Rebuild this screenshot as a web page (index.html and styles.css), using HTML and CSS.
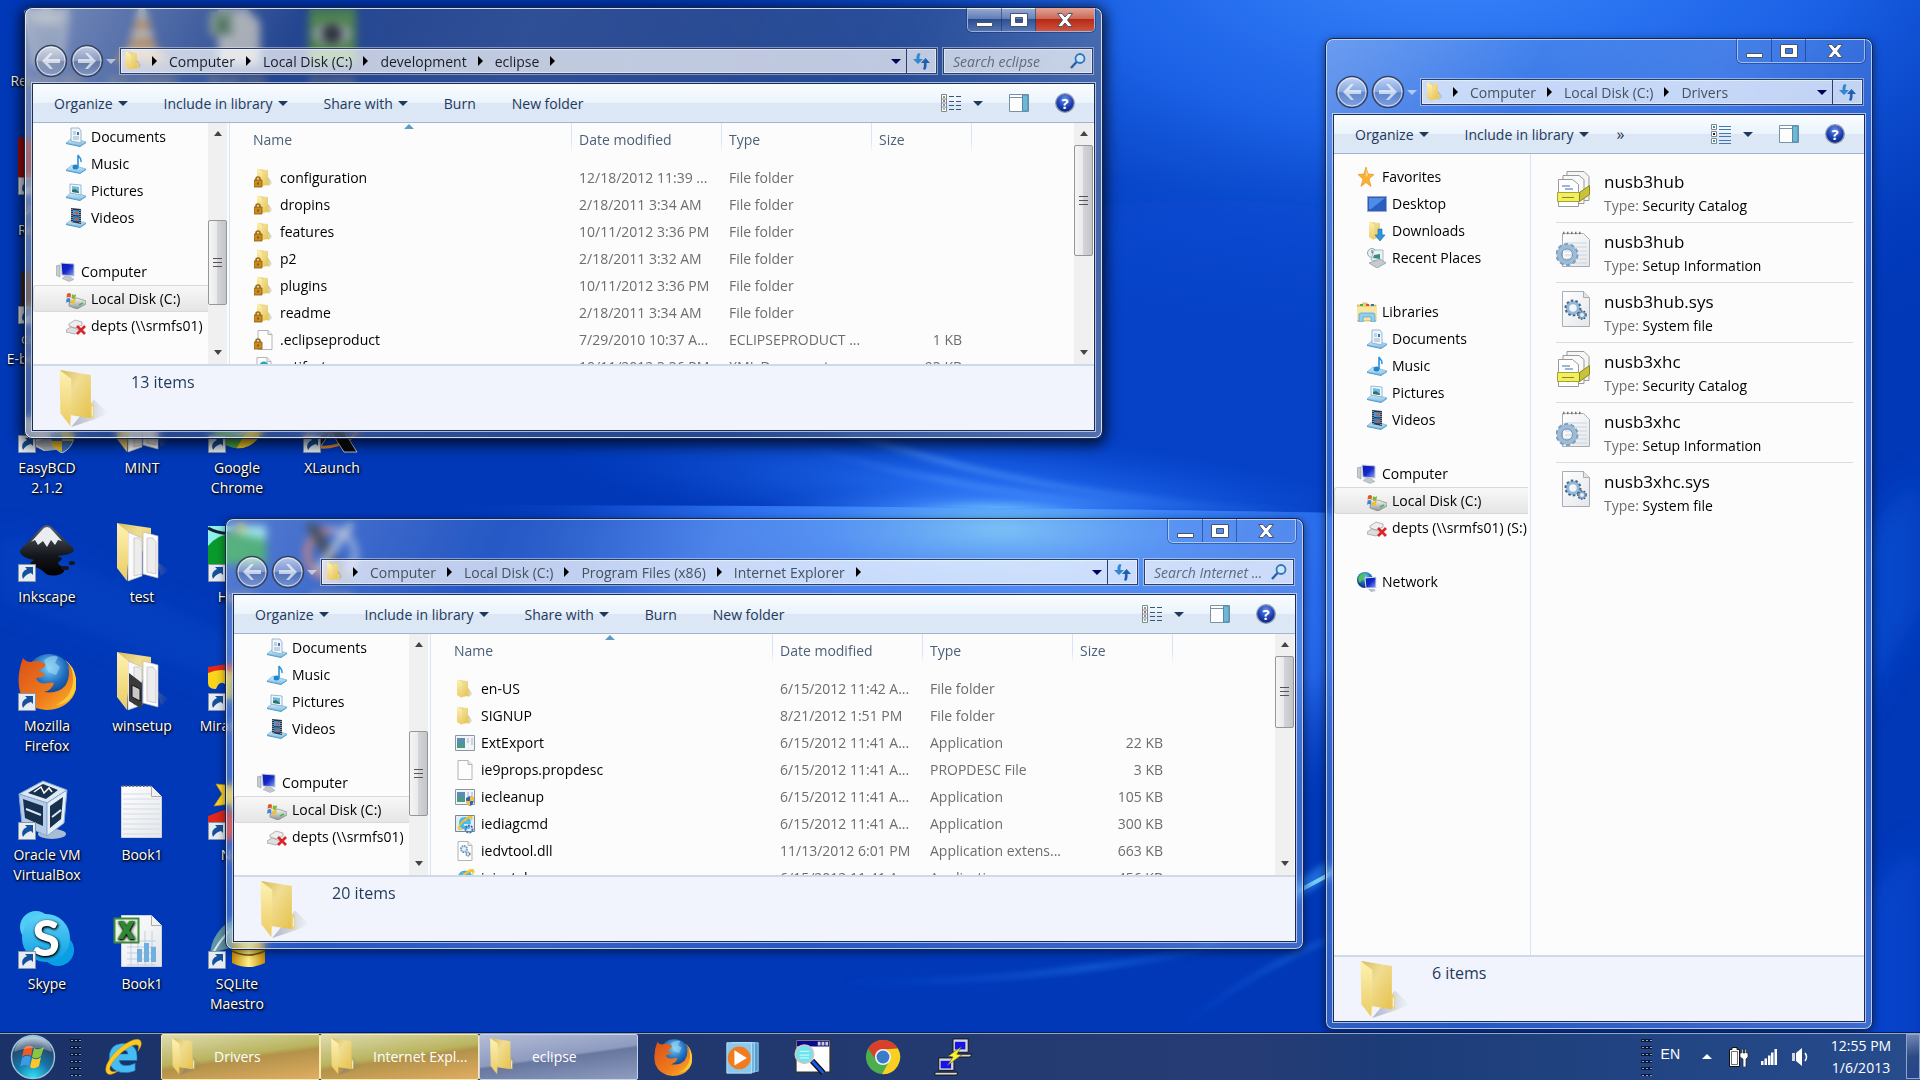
FILE: index.html
```html
<!DOCTYPE html>
<html lang="en">

<head>
    <meta charset="UTF-8">
    <meta name="viewport" content="width=device-width, initial-scale=1.0">
    <title>Desktop</title>
    <link rel="stylesheet" href="styles.css">
</head>

<body>
    <!-- Icon library -->
    <svg class="sprite" width="0" height="0" aria-hidden="true">
        <defs>
            <linearGradient id="gFlap" x1="0" y1="0" x2="0" y2="1"><stop offset="0" stop-color="#fdf2b4"/><stop offset="1" stop-color="#eccb62"/></linearGradient>
            <linearGradient id="gBack" x1="0" y1="0" x2="1" y2="1"><stop offset="0" stop-color="#d9bb62"/><stop offset=".4" stop-color="#f0dd92"/><stop offset="1" stop-color="#e6c24c"/></linearGradient>
            <linearGradient id="gShade" x1="0" y1="0" x2="1" y2="0"><stop offset="0" stop-color="#70788a" stop-opacity=".5"/><stop offset="1" stop-color="#70788a" stop-opacity="0"/></linearGradient>
            <linearGradient id="gPage" x1="0" y1="0" x2="1" y2="1"><stop offset="0" stop-color="#ffffff"/><stop offset="1" stop-color="#e4e6ea"/></linearGradient>
            <linearGradient id="gStand" x1="0" y1="0" x2="0" y2="1"><stop offset="0" stop-color="#d8effb"/><stop offset="1" stop-color="#7fbfe4"/></linearGradient>
            <linearGradient id="gScreen" x1="0" y1="0" x2="1" y2="1"><stop offset="0" stop-color="#0a1cb4"/><stop offset=".5" stop-color="#1427c8"/><stop offset="1" stop-color="#8fa8f4"/></linearGradient>
            <linearGradient id="gMetal" x1="0" y1="0" x2="0" y2="1"><stop offset="0" stop-color="#f6f6f6"/><stop offset="1" stop-color="#8e9396"/></linearGradient>
            <radialGradient id="gHelp" cx=".5" cy=".3" r=".7"><stop offset="0" stop-color="#6d92ee"/><stop offset=".6" stop-color="#1b3fb4"/><stop offset="1" stop-color="#0d2378"/></radialGradient>
            <radialGradient id="gOrb" cx=".5" cy="1" r=".95"><stop offset="0" stop-color="#33e6fb"/><stop offset=".45" stop-color="#1576a8"/><stop offset=".8" stop-color="#27486e"/><stop offset="1" stop-color="#a3bdcf"/></radialGradient>
            <radialGradient id="gGlobe" cx=".5" cy=".3" r=".7"><stop offset="0" stop-color="#7fd0f8"/><stop offset=".5" stop-color="#1f6fc0"/><stop offset="1" stop-color="#0a2a6e"/></radialGradient>
            <linearGradient id="gFox" x1="0" y1="0" x2="1" y2="1"><stop offset="0" stop-color="#d8501a"/><stop offset=".6" stop-color="#f07c1c"/><stop offset="1" stop-color="#fbc02a"/></linearGradient>
            <linearGradient id="gSky" x1="0" y1="0" x2="0" y2="1"><stop offset="0" stop-color="#5fd3f8"/><stop offset="1" stop-color="#0a9ee4"/></linearGradient>
            <linearGradient id="gInk" x1="0" y1="0" x2="0" y2="1"><stop offset="0" stop-color="#5a6068"/><stop offset=".6" stop-color="#14171c"/><stop offset="1" stop-color="#000"/></linearGradient>
            <linearGradient id="gGold" x1="0" y1="0" x2="1" y2="0"><stop offset="0" stop-color="#c48a00"/><stop offset=".5" stop-color="#fff08a"/><stop offset="1" stop-color="#c48a00"/></linearGradient>
            <linearGradient id="gNavBtn" x1="0" y1="0" x2="0" y2="1"><stop offset="0" stop-color="#fff" stop-opacity=".65"/><stop offset=".5" stop-color="#b4bfd8" stop-opacity=".5"/><stop offset=".52" stop-color="#6a7894" stop-opacity=".35"/><stop offset="1" stop-color="#b4c2e4" stop-opacity=".45"/></linearGradient>
        </defs>

        <symbol id="folder" viewBox="0 0 20 20">
            <path d="M13 9l5 6-5 3z" fill="url(#gShade)"/>
            <path d="M2 1l11 1v15l-6 1z" fill="url(#gBack)"/>
            <path d="M2 0l5 3v16l-5-3z" fill="url(#gFlap)"/>
            <path d="M13 11l1.500 1v5l-1.500.5z" fill="#ecd476"/>
        </symbol>
        <symbol id="folder-locked" viewBox="0 0 20 20">
            <use href="#folder" x="1"/>
            <use href="#lock"/>
        </symbol>
        <symbol id="lock" viewBox="0 0 20 20">
            <path d="M2 13v-2a2 2 0 0 1 4 0v2" fill="none" stroke="#9a6a1c" stroke-width="1.6"/>
            <path d="M0 12h8v7H0z" fill="#c98a22" stroke="#8a5a10" stroke-width=".8"/>
            <path d="M3.500 14.500h1v2h-1z" fill="#4a2c00"/>
        </symbol>
        <symbol id="folder-big" viewBox="0 0 50 58">
            <path d="M35 30l15 14-14 6-24 8z" fill="url(#gShade)"/>
            <path d="M1 0l31 5v44l-20-3z" fill="url(#gBack)"/>
            <path d="M32 33l3 2v14l-3-1z" fill="#f0d26a"/>
            <path d="M33 37l1 .5v9l-1-.5z" fill="#eef6ff"/>
            <path d="M0 0l12 9v30l-1 18L1 44z" fill="url(#gFlap)"/>
        </symbol>
        <symbol id="page" viewBox="0 0 20 20">
            <path d="M3 .5h10l4 4v15H3z" fill="#fdfdfd" stroke="#b4b4b4"/>
            <path d="M13 .5v4h4" fill="#ececec" stroke="#b4b4b4"/>
        </symbol>
        <symbol id="page-locked" viewBox="0 0 20 20">
            <use href="#page" x="1"/>
            <use href="#lock"/>
        </symbol>
        <symbol id="page-xml" viewBox="0 0 20 20">
            <use href="#page"/>
            <circle cx="10" cy="9" r="4.500" fill="#2aa0c8"/>
            <path d="M8 6l3 1-1 3-3-1z" fill="#3ab04a"/>
            <path d="M4 7l-2 2 2 2M16 7l2 2-2 2" fill="none" stroke="#555"/>
        </symbol>
        <symbol id="app" viewBox="0 0 20 20">
            <path d="M.5 2.500h19v15H.5z" fill="#f2f5f8" stroke="#8a96a4"/>
            <path d="M2 5h8v10H2z" fill="#4a9a86"/>
            <path d="M2 5h8v5H2z" fill="#5b8cb4"/>
            <path d="M12 5h2v5h-2zM16 5h2v7h-2z" fill="#c9d2de"/>
        </symbol>
        <symbol id="app-shield" viewBox="0 0 20 20">
            <use href="#app"/>
            <path d="M11 11l4-2 4 2c0 4-1 7-4 8-3-1-4-4-4-8z" fill="#2f62c8"/>
            <path d="M15 9l4 2v3h-4zM11 14h4v5c-3-1-4-3-4-5z" fill="#f6c52c"/>
        </symbol>
        <symbol id="ie" viewBox="0 0 40 40">
            <text x="20" y="35" text-anchor="middle" font-family="Open Sans, sans-serif" font-weight="800" font-size="52" fill="#46bdf2" stroke="#1a7cc4" stroke-width=".6">e</text>
            <path d="M5 37C-1 33 6 20 17 11S37 0 38 5c1 3-1 6-3 9 1-4 1-6-1-6-4-1-12 4-19 11S5 32 8 34c1 1 4 1 7 0-4 3-8 4-10 3z" fill="#fbc926" stroke="#c98c00" stroke-width=".5"/>
        </symbol>
        <symbol id="ie-tool" viewBox="0 0 20 20">
            <path d="M.5 1.500h19v16H.5z" fill="#e4ecf4" stroke="#7a8694"/>
            <use href="#ie" x="2" y="1" width="16" height="16"/>
            <circle cx="14" cy="15" r="3.500" fill="none" stroke="#3f74b4" stroke-width="2" stroke-dasharray="2 1"/>
        </symbol>
        <symbol id="page-gears" viewBox="0 0 20 20">
            <use href="#page"/>
            <circle cx="9" cy="8" r="3" fill="#e8f2fa" stroke="#6f9cc0" stroke-width="2" stroke-dasharray="1.600 .7"/>
            <circle cx="13" cy="13" r="1.800" fill="#e8f2fa" stroke="#5c7c9c" stroke-width="1.500" stroke-dasharray="1.200 .6"/>
        </symbol>

        <!-- navigation pane -->
        <symbol id="stand" viewBox="0 0 20 20">
            <path d="M0 16l6-5 14 4-6 4z" fill="url(#gStand)" stroke="#5aa5d2" stroke-width=".6"/>
            <path d="M0 16v1l14 3 6-4v-1l-6 4z" fill="#4d9bcb"/>
        </symbol>
        <symbol id="documents" viewBox="0 0 20 20">
            <use href="#stand"/>
            <path d="M5 1h8l2 3v12l-10-2z" fill="#eef5fb" stroke="#86a8c4" stroke-width=".8"/>
            <path d="M7 5h3M7 7h3M7 10h6M7 12h6" stroke="#7ea0c0" stroke-width=".8"/>
            <path d="M11 5h2v3h-2z" fill="#3f74b4"/>
        </symbol>
        <symbol id="music" viewBox="0 0 20 20">
            <use href="#stand"/>
            <ellipse cx="9.500" cy="13" rx="3" ry="2.500" fill="#1c86d0"/>
            <path d="M12 13V1c1 3 4 3 3 7" fill="none" stroke="#2a90d8" stroke-width="1.600"/>
        </symbol>
        <symbol id="pictures" viewBox="0 0 20 20">
            <use href="#stand"/>
            <path d="M4 3l11 1v10L4 12z" fill="#f4f9fd" stroke="#7ea8c8" stroke-width=".8"/>
            <path d="M6 5l7 1v6l-7-1z" fill="#6fb8e8"/>
            <path d="M6 9l3-1 4 3v1l-7-1z" fill="#35705a"/>
        </symbol>
        <symbol id="videos" viewBox="0 0 20 20">
            <use href="#stand"/>
            <path d="M5 0l10 1v15L5 14z" fill="#263344"/>
            <path d="M7 2l6 .5v5L7 7z" fill="#4a9ae0"/>
            <path d="M7 8l6 .5v5L7 13z" fill="#3a80c0"/>
            <path d="M8 5l4-2v4zM8 12l4-2v3z" fill="#c2603a"/>
            <path d="M6 1v13M14 2v13" stroke="#dfe8f0" stroke-dasharray="1 1"/>
        </symbol>
        <symbol id="computer" viewBox="0 0 20 20">
            <path d="M0 4l4-1v12l-4-2z" fill="#c6ccd2" stroke="#8a929a" stroke-width=".6"/>
            <path d="M5 1l13 1v12L6 13z" fill="url(#gScreen)" stroke="#c4cad6"/>
            <path d="M9 14l5 .5 4 3-5 2-7-3z" fill="#c4c8ce" stroke="#9aa0a6" stroke-width=".5"/>
        </symbol>
        <symbol id="disk" viewBox="0 0 20 20">
            <path d="M3 14l8-5 9 3v3l-9 5-8-3z" fill="url(#gMetal)" stroke="#777" stroke-width=".6"/>
            <path d="M13 16l4-2" stroke="#3ac04a" stroke-width="1.500"/>
            <path d="M1 5q2-2 4 0l-.5 4q-2-2-4 0z" fill="#e2582a"/>
            <path d="M6 5q2 2 4 0l-.5 4q-2 2-4 0z" fill="#7fba35"/>
            <path d="M.5 10q2-2 4 0L4 14q-2-2-4 0z" fill="#3f86d0"/>
            <path d="M5.500 10q2 2 4 0L9 14q-2 2-4 0z" fill="#f6bf2c"/>
        </symbol>
        <symbol id="netdrive" viewBox="0 0 20 20">
            <path d="M3 8l6-4 7 2v3l-7 3-6-2z" fill="#eee" stroke="#999" stroke-width=".7"/>
            <path d="M0 14l5-3 9 3v2l-5 2-9-2z" fill="#ddd" stroke="#999" stroke-width=".7"/>
            <path d="M11 10l8 8M19 10l-8 8" stroke="#d8262a" stroke-width="2.600"/>
        </symbol>
        <symbol id="star" viewBox="0 0 20 20">
            <path d="M9 0l2 7 6 .5-5 4.500 2 7.500-5-4-5 4 2-7.500-5-4.500 6-.5z" fill="#f9b233" stroke="#e8912a" stroke-width=".7"/>
            <path d="M9 2l2 6-2 2z" fill="#fde08a"/>
        </symbol>
        <symbol id="desktop-i" viewBox="0 0 20 20">
            <path d="M.5 2.500h19v15H.5z" fill="#2a5fc0" stroke="#98a8c4"/>
            <path d="M2 4h16L4 15H2z" fill="#4f8ce8"/>
        </symbol>
        <symbol id="downloads" viewBox="0 0 20 20">
            <use href="#folder"/>
            <path d="M11 8h4v6h3l-5 6-5-6h3z" fill="#2c95dc" stroke="#1a6fb0" stroke-width=".6"/>
        </symbol>
        <symbol id="recent" viewBox="0 0 20 20">
            <circle cx="5" cy="5" r="4.500" fill="#e8eef4" stroke="#98a4b0"/>
            <path d="M5 2v3h2" fill="none" stroke="#667"/>
            <path d="M7 2h9v12l-12-2z" fill="#eaf2f8" stroke="#8aa0b4" stroke-width=".7"/>
            <path d="M7 7l6-1v5l-7-1z" fill="#35907a"/>
            <path d="M2 15l11-4 6 4-9 5z" fill="#c4cad0" stroke="#88929c" stroke-width=".7"/>
        </symbol>
        <symbol id="libraries" viewBox="0 0 20 20">
            <path d="M0 3h5l1-2h4l1 2h8v16H0z" fill="#efd37a" stroke="#caa44a" stroke-width=".6"/>
            <path d="M3 2h3v2H3z" fill="#4fae4a"/><path d="M9 2h3v2H9z" fill="#d8502a"/><path d="M14 2h3v2h-3z" fill="#2a74c8"/>
            <path d="M0 5h20v13H0z" fill="#f8e6a4"/>
            <path d="M2 20v-7q0-2 2-2h12q2 0 2 2v7h-4v-5H6v5z" fill="#8fd0f2" stroke="#4d9fd0" stroke-width=".7"/>
        </symbol>
        <symbol id="network" viewBox="0 0 20 20">
            <circle cx="8" cy="8" r="8" fill="url(#gGlobe)"/>
            <path d="M2 4q4-4 7-2l-2 4-4 5q-3-3-1-7z" fill="#4fc05a"/>
            <path d="M8 6l11-1v11l-10 0z" fill="url(#gScreen)" stroke="#dfe4ee"/>
            <path d="M11 17h6l2 2-5 1z" fill="#b8bec6"/>
        </symbol>

        <!-- toolbar -->
        <symbol id="view-details" viewBox="0 0 20 20">
            <path d="M.5 1.500h5v17h-5z" fill="#fff" stroke="#7c8894"/>
            <path d="M0 6h6M0 10h6M0 14h6" stroke="#7c8894"/>
            <path d="M2 4h2" stroke="#3a9a4a" stroke-width="1.500"/><path d="M2 8h2" stroke="#d8302a" stroke-width="1.500"/><path d="M2 12h2" stroke="#3a74d8" stroke-width="1.500"/><path d="M2 16h2" stroke="#7ab02a" stroke-width="1.500"/>
            <path d="M8 3.500h12M8 8.500h12M8 12.500h12M8 16.500h12" stroke="#3c5670" stroke-dasharray="5 2"/>
        </symbol>
        <symbol id="view-tiles" viewBox="0 0 20 20">
            <path d="M.5 .5h5v5h-5zM.5 7.500h5v5h-5zM.5 14.500h5v5h-5z" fill="#fff" stroke="#7c8894"/>
            <path d="M2 3h2" stroke="#2a9a8a" stroke-width="2"/><path d="M2 10h2" stroke="#222" stroke-width="2"/><path d="M2 17h2" stroke="#2a9a8a" stroke-width="2"/>
            <path d="M8 2.500h12M8 5.500h12M8 9.500h12M8 12.500h12M8 16.500h12M8 19.500h12" stroke="#4a74b0"/>
        </symbol>
        <symbol id="pane" viewBox="0 0 20 20">
            <path d="M.5 1.500h19v17H.5z" fill="#fdfdfd" stroke="#7a92a8"/>
            <path d="M1 4.500h12" stroke="#7a92a8"/>
            <path d="M13.500 2h5.500v16h-5.500z" fill="#6fb8d4" stroke="#4d8cac"/>
        </symbol>
        <symbol id="help" viewBox="0 0 20 20">
            <circle cx="10" cy="10" r="9.300" fill="url(#gHelp)" stroke="#8f9ab4" stroke-width="1.300"/>
            <text x="10" y="15.500" text-anchor="middle" font-family="Open Sans, sans-serif" font-weight="700" font-size="15" fill="#fff">?</text>
        </symbol>
        <symbol id="refresh" viewBox="0 0 18 18">
            <path d="M6 1Q3 2 3.500 7H0l5 5 5-5H6.500Q6 4 7.500 2z" fill="#3587cc"/>
            <path d="M12 18q2-2 1.500-7H17l-4.500-5L8 11h3q0 4-1 6z" fill="#1f5fae"/>
        </symbol>
        <symbol id="search" viewBox="0 0 16 16">
            <circle cx="10" cy="5.500" r="4.500" fill="#d6eafa" fill-opacity=".6" stroke="#2d78b8" stroke-width="1.800"/>
            <path d="M6.500 9L1 15" stroke="#2a5fa8" stroke-width="2.400"/>
        </symbol>
        <symbol id="nav-back" viewBox="0 0 34 34">
            <circle cx="17" cy="17" r="15.500" fill="url(#gNavBtn)" stroke="#36435e" stroke-width="1.500"/>
            <circle cx="17" cy="17" r="14" fill="none" stroke="#fff" stroke-opacity=".65"/>
            <path d="M8 17l8-8h3l-5 6h12v4H14l5 6h-3z" fill="#fff" fill-opacity=".65"/>
        </symbol>

        <!-- window buttons -->
        <symbol id="w-min" viewBox="0 0 20 16">
            <path d="M1.500 10.500h16v4h-16z" fill="#fff" stroke="#4a5468"/>
        </symbol>
        <symbol id="w-max" viewBox="0 0 20 16">
            <path d="M1.500 1.500h17v13h-17zM6.500 5.500v5h7v-5z" fill="#fff" fill-rule="evenodd" stroke="#4a5468"/>
        </symbol>
        <symbol id="w-close" viewBox="0 0 20 16">
            <path d="M2.500 1.500h4.500L10 5l3-3.500h4.500L12.500 8l5 6.500H13L10 11l-3 3.500H2.500l5-6.500z" fill="#fff" stroke="#4a5468"/>
        </symbol>

        <!-- tiles -->
        <symbol id="catalog" viewBox="0 0 36 36">
            <path d="M11 .5h17l5 5v24H11z" fill="#f6f6f6" stroke="#999"/>
            <path d="M7 4.500h16l5 4v24H7z" fill="#fafafa" stroke="#999"/>
            <path d="M2.500 8.500h14l6 5v22h-20z" fill="#fff" stroke="#999"/>
            <path d="M6 15h8M9 18h8" stroke="#3a6cb8" stroke-width="1.200"/>
            <path d="M1.500 21.500h22v9h-22z" fill="#f2ee62" stroke="#a8a42a"/>
            <path d="M23.500 21.500l10-7v9l-10 7z" fill="#c8c43a" stroke="#8a861c"/>
            <path d="M6 26.500h12" stroke="#8a861c"/>
        </symbol>
        <symbol id="inf" viewBox="0 0 36 36">
            <path d="M6.500 2.500h21l6 6v27h-27z" fill="url(#gPage)" stroke="#a8acb4"/>
            <path d="M7 2h18" stroke="#777" stroke-width="2.500" stroke-dasharray="1.500 2.500"/>
            <path d="M9 12h22M9 16h22M9 20h22M9 24h22M9 28h22M9 32h22" stroke="#cdd4e0"/>
            <circle cx="11" cy="23.500" r="8" fill="none" stroke="#9fbcd6" stroke-width="5"/>
            <circle cx="11" cy="23.500" r="10.500" fill="none" stroke="#7d9fc0" stroke-width="2" stroke-dasharray="4 2.600"/>
            <circle cx="11" cy="23.500" r="5.500" fill="none" stroke="#6d8fb4"/>
        </symbol>
        <symbol id="sys" viewBox="0 0 36 36">
            <path d="M6.500.5h21l6 6v29h-27z" fill="url(#gPage)" stroke="#a8acb4"/>
            <path d="M27.500.5v6h6" fill="#e4e4e4" stroke="#a8acb4"/>
            <circle cx="17" cy="17" r="5.500" fill="none" stroke="#8fb8dc" stroke-width="3.500"/>
            <circle cx="17" cy="17" r="7.500" fill="none" stroke="#4a6480" stroke-width="2" stroke-dasharray="2.500 2.200"/>
            <circle cx="26" cy="24" r="3" fill="none" stroke="#7aa4cc" stroke-width="2"/>
            <circle cx="26" cy="24" r="4.200" fill="none" stroke="#3a5068" stroke-width="1.200" stroke-dasharray="1.600 1.400"/>
        </symbol>

        <!-- desktop shortcuts, 58 x 60 -->
        <symbol id="shortcut" viewBox="0 0 58 60">
            <path d="M.5 42.500h17v17H.5z" fill="#e6ecf4" stroke="#8a94a4"/>
            <path d="M5 57q-3-7 4-10l-2-2h8v8l-2-2q-5 1-8 6z" fill="#16509c"/>
        </symbol>
        <symbol id="d-bin" viewBox="0 0 58 60">
            <path d="M8 6h42l-7 52H16z" fill="#cfe0ee" fill-opacity=".55" stroke="#eaf4fb" stroke-width="3"/>
            <path d="M10 8l18-6 20 6-8 12-20-2z" fill="#f2f6fa" fill-opacity=".8"/>
        </symbol>
        <symbol id="d-vlc" viewBox="0 0 58 60">
            <path d="M8 46h42l5 11H3z" fill="#f08a1c"/>
            <path d="M26 2h6l13 46H13z" fill="#f2f2f2"/>
            <path d="M23 14h12l3 10H20zM18 32h22l3 10H15z" fill="#f0861a"/>
        </symbol>
        <symbol id="d-xlsdoc" viewBox="0 0 58 60">
            <path d="M10 4h30l12 12v43H10z" fill="#fcfcfc"/>
            <path d="M2 6h24v24H2z" fill="#b9dcb2"/>
            <text x="14" y="26" text-anchor="middle" font-family="Open Sans, sans-serif" font-weight="800" font-size="22" fill="#2d8a34">X</text>
        </symbol>
        <symbol id="d-eye" viewBox="0 0 58 60">
            <path d="M6 4h47v54H6z" fill="#52b030"/>
            <ellipse cx="29" cy="28" rx="19" ry="11" fill="#dfe3df"/>
            <circle cx="29" cy="28" r="10" fill="#111"/>
        </symbol>
        <symbol id="d-adobe" viewBox="0 0 58 60">
            <path d="M0 2l8 2h50v54H0z" fill="#a30c0c"/>
            <use href="#shortcut"/>
        </symbol>
        <symbol id="d-calibre" viewBox="0 0 58 60">
            <path d="M3 8h55v50H3z" fill="#4a2a1a"/>
            <use href="#shortcut"/>
        </symbol>
        <symbol id="d-easybcd" viewBox="0 0 58 60">
            <path d="M6 24h46l-6 30-20 4-16-8z" fill="#d7dce0"/>
            <path d="M16 50l14-6 24 4-8 8-18 2z" fill="#aeb4ba"/>
            <path d="M32 40l12-4 12 4c0 10-4 16-12 20-8-4-12-10-12-20z" fill="#3a76c8" stroke="#ddd"/>
            <path d="M44 36l12 4v8H44zM33 48h11v11c-7-3-10-6-11-11z" fill="#f0c22c"/>
            <use href="#shortcut"/>
        </symbol>
        <symbol id="d-folder" viewBox="0 0 58 60">
            <path d="M44 40l12 8-8 6z" fill="url(#gShade)"/>
            <path d="M4 1l34 5v10L16 50z" fill="url(#gBack)"/>
            <path d="M15 10l14 6v38l-14 5z" fill="#fafafa" stroke="#b8b8b8" stroke-width=".7"/>
            <path d="M30 10l15 4v42l-15-4z" fill="#fff" stroke="#b8b8b8" stroke-width=".7"/>
            <path d="M21 16h5l3 4v32l-8 2zM34 16h6l3 4v32l-9-2z" fill="#ededee" stroke="#bbb" stroke-width=".7"/>
            <path d="M4 1l11 9v25l-1 24L4 46z" fill="url(#gFlap)"/>
        </symbol>
        <symbol id="d-winsetup" viewBox="0 0 58 60">
            <use href="#d-folder"/>
            <path d="M16 22l13 10v26l-13-8z" fill="#3a3a3a"/>
            <path d="M19 34l8 4v12l-8-4z" fill="#c8c8c8" stroke="#111"/>
        </symbol>
        <symbol id="chrome" viewBox="0 0 40 40">
            <circle cx="20" cy="20" r="18" fill="#4cae4c"/>
            <path d="M4.400 11A18 18 0 0 1 35.600 11L20 12a8 8 0 0 0-7 12z" fill="#d8402c"/>
            <path d="M35.600 11A18 18 0 0 1 19 38l8-14a8 8 0 0 0-7-12z" fill="#fbcf22"/>
            <circle cx="20" cy="20" r="8.500" fill="#f4f4f4"/>
            <circle cx="20" cy="20" r="6.800" fill="#3a7cc8"/>
        </symbol>
        <symbol id="d-chrome" viewBox="0 0 58 60">
            <use href="#chrome" x="2" y="2" width="56" height="56"/>
            <use href="#shortcut"/>
        </symbol>
        <symbol id="d-xlaunch" viewBox="0 0 58 60">
            <ellipse cx="29" cy="40" rx="26" ry="13" fill="none" stroke="#e88a2a" stroke-width="3" transform="rotate(-14 29 40)"/>
            <path d="M6 4h13l35 55H41z" fill="#0a0a0a" stroke="#eee" stroke-width=".8"/>
            <path d="M46 4h8L14 58H6z" fill="#222" stroke="#eee" stroke-width=".8"/>
            <use href="#shortcut"/>
        </symbol>
        <symbol id="d-xming" viewBox="0 0 58 60">
            <circle cx="28" cy="32" r="24" fill="none" stroke="#e0603a" stroke-width="6"/>
            <path d="M28 8a24 24 0 0 1 0 48" fill="none" stroke="#8fa8dc" stroke-width="6"/>
            <path d="M2 2h12l32 56H34z" fill="#050505"/>
            <path d="M44 2h8L18 50h-8z" fill="#c4c8d0"/>
        </symbol>
        <symbol id="d-inkscape" viewBox="0 0 58 60">
            <path d="M29 3q3 0 6 3l18 18q6 5 0 7-4 2-14 3 8 2 3 5-5 3 4 6 2 6-6 8-10 2-14-3-4-4-12-6-4-3 2-6Q4 36 2 30q0-3 4-6L23 6q3-3 6-3z" fill="url(#gInk)"/>
            <path d="M29 5q3 0 5 3l10 11-4-1-3 5-4-5-4 7-4-6-5 4-3-5-4 2L24 8q2-3 5-3z" fill="#e9edf2"/>
            <ellipse cx="47" cy="46" rx="4" ry="2" fill="#14171c"/><ellipse cx="54" cy="41" rx="3" ry="2" fill="#14171c"/>
            <use href="#shortcut"/>
        </symbol>
        <symbol id="firefox" viewBox="0 0 58 58">
            <circle cx="31" cy="25" r="23" fill="url(#gGlobe)"/>
            <path d="M26 8q8-6 14-3l-3 6 5 4-4 8-8-3z" fill="#9fd8f4" fill-opacity=".6"/>
            <path d="M5 6q3 4 8 4 8-3 14 2 1 3-4 5l-3 2q6 1 7 4-4 3-9 3 2 7 12 5 4-1 6 0-2 7-10 9 14 2 21-6 6-9 3-21 7 8 7 19 2-4 1-10 3 14-4 24-9 12-26 12Q8 56 2 40-2 24 5 6z" fill="url(#gFox)"/>
            <path d="M47 8q9 9 8 22-2 16-17 23 22-3 20-27-2-12-11-18z" fill="#fbcb3a"/>
        </symbol>
        <symbol id="d-firefox" viewBox="0 0 58 60">
            <use href="#firefox" y="1" width="58" height="58"/>
            <use href="#shortcut"/>
        </symbol>
        <symbol id="d-vbox" viewBox="0 0 58 60">
            <ellipse cx="34" cy="54" rx="14" ry="5" fill="#a8bcd4"/>
            <path d="M25 1l24 9-20 13L1 14z" fill="#dce8f4" stroke="#8aa8cc"/>
            <path d="M1 14l28 9v33L4 44z" fill="#b4cce8" stroke="#8aa8cc"/>
            <path d="M49 10L29 23v33l17-13z" fill="#e4eef8" stroke="#8aa8cc"/>
            <path d="M25 4l15 6-12 9-18-6z" fill="#16304e"/>
            <path d="M16 12l7-5 3 6 5-5 3 4" fill="none" stroke="#fff" stroke-width="1.500"/>
            <path d="M5 19l20 7v20L7 38zM45 17L32 26v22l11-9z" fill="#16304e"/>
            <path d="M8 29l15 6M34 37l9-7" stroke="#dce8f4" stroke-width="2"/>
            <use href="#shortcut"/>
        </symbol>
        <symbol id="d-text" viewBox="0 0 58 60">
            <path d="M8.500 6.500h30l10 10v41h-40z" fill="url(#gPage)" stroke="#ccd2dc"/>
            <path d="M9 6h29" stroke="#666" stroke-width="2" stroke-dasharray="1.500 2"/>
            <path d="M10 14h29M10 19h37M10 24h37M10 29h37M10 34h37M10 39h37M10 44h37M10 49h37M10 54h37" stroke="#d4dae6"/>
            <path d="M38.500 6.500v10h10" fill="#f2f2f2" stroke="#aaa"/>
        </symbol>
        <symbol id="d-skype" viewBox="0 0 58 60">
            <circle cx="18" cy="18" r="16" fill="#4fcdf6"/><circle cx="40" cy="41" r="16" fill="#0a9ee4"/>
            <circle cx="28" cy="29" r="24" fill="url(#gSky)"/>
            <text x="28" y="47" text-anchor="middle" font-family="Lato, sans-serif" font-weight="900" font-size="50" fill="#fff">S</text>
            <use href="#shortcut"/>
        </symbol>
        <symbol id="d-excel" viewBox="0 0 58 60">
            <path d="M8.500 6.500h30l10 10v41h-40z" fill="url(#gPage)" stroke="#ccd2dc"/>
            <path d="M38.500 6.500v10h10" fill="#f2f2f2" stroke="#aaa"/>
            <path d="M14 32h29M14 38h29M14 44h29M14 50h29M14 56h29M18 26v30M25 22v34M32 22v34M39 22v34" stroke="#b4c8dc" stroke-width=".8"/>
            <path d="M24 40h5v13h-5zM31 34h5v19h-5zM38 38h5v15h-5z" fill="#6fb0e0"/>
            <path d="M1.500 9.500h24v24h-24z" fill="#e8f4e4" stroke="#3c8a3c" stroke-width="2"/>
            <text x="13.500" y="30" text-anchor="middle" font-family="Open Sans, sans-serif" font-weight="800" font-size="24" fill="#2d8a34">X</text>
        </symbol>
        <symbol id="d-hills" viewBox="0 0 58 60">
            <path d="M0 4h58v36H0z" fill="#8ff0ec"/>
            <path d="M0 24q10-12 24-12t34 6v24H0z" fill="#0a9a2c"/>
            <path d="M0 6q14 8 30 4" fill="none" stroke="#123" stroke-width="3"/>
            <circle cx="33" cy="6" r="5" fill="#d8d020"/>
            <use href="#shortcut"/>
        </symbol>
        <symbol id="d-miranda" viewBox="0 0 58 60">
            <path d="M0 16q28-6 56 0v8q-28-8-56 0z" fill="#e0281c"/>
            <path d="M0 22q14-6 26 0v26h-8V34q-6-6-10 4-8 0-8-6zM26 22q12-8 26 0v26h-8V32q-6-6-10 0z" fill="#fbd41c"/>
            <use href="#shortcut"/>
        </symbol>
        <symbol id="d-nero" viewBox="0 0 58 60">
            <path d="M0 36l16-6 10 4 10-14 6 16 16 4-14 8 2 12H10l4-12-14 2z" fill="#e0281c"/>
            <path d="M8 4l20 2 22-4-6 10 8 10-16 2-8 8-6-8-16 2 8-12z" fill="#fbd22c" stroke="#c89400" stroke-width=".7"/>
            <use href="#shortcut"/>
        </symbol>
        <symbol id="d-sqlite" viewBox="0 0 58 60">
            <path d="M2 44Q6 12 44 4q-8 20-18 34z" fill="#5f96a8"/>
            <path d="M4 46Q16 22 38 10" fill="none" stroke="#d4e6ea" stroke-width="2"/>
            <path d="M24 28v26q16 8 33 0V28z" fill="url(#gGold)"/>
            <path d="M24 42q16 8 33 0" fill="none" stroke="#7a5200" stroke-width="1.500"/>
            <ellipse cx="40.500" cy="28" rx="16.500" ry="5" fill="#fff4a8"/>
            <use href="#shortcut"/>
        </symbol>

        <!-- taskbar -->
        <symbol id="orb" viewBox="0 0 46 46">
            <circle cx="23" cy="23" r="21.500" fill="url(#gOrb)" stroke="#9cc4dc" stroke-width="1.400"/>
            <path d="M14 14q4-4 9-1l-2 9q-5-3-9 1z" fill="#ee5a24"/>
            <path d="M24 14q5 3 10-1l-3 9q-4 4-9 1z" fill="#8cc63e"/>
            <path d="M12 24q4-4 9-1l-2 9q-5-3-9 1z" fill="#3f9ae4"/>
            <path d="M22 24q5 3 9-1l-2 9q-5 4-9 1z" fill="#fbc52c"/>
            <path d="M4 18Q8 3 23 3t19 15q-19-8-38 0z" fill="#fff" fill-opacity=".28"/>
        </symbol>
        <symbol id="wmp" viewBox="0 0 40 40">
            <path d="M12 5h24v30H12z" fill="#5a9cc8" stroke="#8fcdf0"/><path d="M8 5h24v31H8z" fill="#6fb4dc" stroke="#a8dcf6"/>
            <path d="M3 5h26v32H3z" fill="#8cc8ec" stroke="#b8e4fa"/>
            <circle cx="16" cy="21" r="12" fill="#f07c1e"/>
            <path d="M11 13l13 8-13 8z" fill="#fff"/>
        </symbol>
        <symbol id="inspector" viewBox="0 0 40 40">
            <path d="M2 2h36v34H2z" fill="#fff" stroke="#333" stroke-width="1.500"/>
            <path d="M3 3h34v6H3z" fill="#0a0a8c"/>
            <path d="M25 4h3v4h-3zM29 4h3v4h-3zM33 4h3v4h-3z" fill="#ccc"/>
            <path d="M19 24l12 13" stroke="#111" stroke-width="6"/><path d="M19 24l12 13" stroke="#1a5af0" stroke-width="3"/>
            <circle cx="11" cy="17" r="9.500" fill="#6fe4ec" stroke="#c8c8c8" stroke-width="2"/>
            <path d="M6 14h10M6 18h10M6 21h10" stroke="#d8ffff"/>
        </symbol>
        <symbol id="putty" viewBox="0 0 40 40">
            <path d="M20 1h16v14H20zM16 17h24l-2 3H18z" fill="#d8d8d8" stroke="#111"/>
            <path d="M22 4h11v8H22z" fill="#1414e8"/>
            <path d="M5 21h16v13H5zM1 36h24l-1 3H1z" fill="#d8d8d8" stroke="#111"/>
            <path d="M7 24h11v8H7z" fill="#1414e8"/>
            <path d="M29 9L15 19l5 1-6 9 15-11-5-1z" fill="#fbf02c" stroke="#555" stroke-width=".7"/>
        </symbol>
        <symbol id="battery" viewBox="0 0 20 20">
            <path d="M.5 2.500h2.500v-2h5v2h2.500v17H.5z" fill="#fff" stroke="#111"/>
            <path d="M2.500 4.500h6v13h-6z" fill="#fff" stroke="#333" stroke-width=".7"/>
            <path d="M12.500 2h1.500v4h2V2h1.500v4H19v4l-2 2v8h-3v-8l-3-2V6h1.500z" fill="#fff" stroke="#222" stroke-width=".7"/>
        </symbol>
        <symbol id="signal" viewBox="0 0 16 16">
            <path d="M0 12h2.500v4H0zM3.500 9.500H6V16H3.500zM7 6.500h2.500V16H7zM10 3.500h2.500V16H10zM13.500 0H16v16h-2.500z" fill="#fff"/>
        </symbol>
        <symbol id="speaker" viewBox="0 0 18 20">
            <path d="M0 6h3v8H0z" fill="#d4d8e0"/><path d="M4 6l6-5v18l-6-5z" fill="#fff"/>
            <path d="M13 6q3 4 0 8" fill="none" stroke="#fff" stroke-width="1.500"/>
        </symbol>
    </svg>

    <main class="desktop">
        <!-- Wallpaper -->
        <svg class="wallpaper" viewBox="0 0 1920 1080" preserveAspectRatio="xMidYMid slice" aria-hidden="true">
            <defs>
                <radialGradient id="wTop"><stop offset="0" stop-color="#3f8cff"/><stop offset=".45" stop-color="#1f68ee" stop-opacity=".85"/><stop offset="1" stop-color="#0038b8" stop-opacity="0"/></radialGradient>
                <radialGradient id="wGlow"><stop offset="0" stop-color="#7accff"/><stop offset=".4" stop-color="#3d86fa" stop-opacity=".75"/><stop offset="1" stop-color="#1a5ae0" stop-opacity="0"/></radialGradient>
                <radialGradient id="wLow"><stop offset="0" stop-color="#3c84ff"/><stop offset=".55" stop-color="#2a6cf0" stop-opacity=".85"/><stop offset="1" stop-color="#0038b8" stop-opacity="0"/></radialGradient>
                <radialGradient id="wMist"><stop offset="0" stop-color="#2f7cff" stop-opacity=".9"/><stop offset="1" stop-color="#1458e0" stop-opacity="0"/></radialGradient>
                <linearGradient id="wCurve" x1="0" x2="1"><stop offset="0" stop-color="#5fa2ff" stop-opacity="0"/><stop offset=".3" stop-color="#6aaeff"/><stop offset="1" stop-color="#4a90ff" stop-opacity="0"/></linearGradient>
                <linearGradient id="wLine" x1="0" x2="1"><stop offset="0" stop-color="#2a7cf0" stop-opacity="0"/><stop offset=".8" stop-color="#7fd8ff"/><stop offset="1" stop-color="#b0f0ff"/></linearGradient>
                <linearGradient id="wArc" x1="0" x2="1"><stop offset="0" stop-color="#1f74ee" stop-opacity="0"/><stop offset=".6" stop-color="#2a80f4"/><stop offset="1" stop-color="#1f74ee" stop-opacity="0"/></linearGradient>
                <filter id="soft" x="-20%" y="-50%" width="140%" height="200%"><feGaussianBlur stdDeviation="3"/></filter>
                <filter id="softer" x="-20%" y="-50%" width="140%" height="200%"><feGaussianBlur stdDeviation="14"/></filter>
                <clipPath id="below"><path d="M400 505q500 0 940 8h580v567H400z"/></clipPath>
            </defs>
            <path d="M0 0h1920v1080H0z" fill="#0038b8"/>
            <ellipse cx="1450" cy="-60" rx="880" ry="440" fill="url(#wTop)"/>
            <ellipse cx="1200" cy="360" rx="380" ry="160" fill="#0a50dc" opacity=".45" filter="url(#softer)"/>
            <ellipse cx="980" cy="490" rx="420" ry="60" fill="url(#wMist)" transform="rotate(5 980 490)"/>
            <ellipse cx="990" cy="512" rx="230" ry="34" fill="url(#wGlow)"/>
            <g clip-path="url(#below)">
                <ellipse cx="1060" cy="570" rx="640" ry="270" fill="url(#wLow)"/>
                <ellipse cx="1000" cy="530" rx="460" ry="110" fill="url(#wGlow)"/>
            </g>
            <path d="M780 405q220 98 560 108" fill="none" stroke="url(#wCurve)" stroke-width="4" opacity=".7" filter="url(#soft)"/>
            <path d="M800 445q180 58 500 70" fill="none" stroke="url(#wCurve)" stroke-width="3" opacity=".6" filter="url(#soft)"/>
            <path d="M1200 935q70-26 130-66" fill="none" stroke="#3c9cff" stroke-width="16" opacity=".5" filter="url(#soft)"/>
            <path d="M1240 916q50-18 100-48" fill="none" stroke="url(#wLine)" stroke-width="4"/>
            <path d="M840 982q200 4 420-44" fill="none" stroke="url(#wArc)" stroke-width="4" opacity=".7" filter="url(#soft)"/>
            <path d="M1180 1030q80-70 200-110" fill="none" stroke="url(#wArc)" stroke-width="4" opacity=".6" filter="url(#soft)"/>
            <path d="M0 530l240 110 200 60v60L0 600z" fill="#0f50d0" opacity=".35" filter="url(#softer)"/>
            <path d="M1860 540l60-70v140l-60 100z" fill="#1058dc" opacity=".5" filter="url(#softer)"/>
            <path d="M1860 900l60-60v240h-60z" fill="#0a50dc" opacity=".5" filter="url(#softer)"/>
        </svg>

        <!-- Shortcuts -->
        <ul class="icon-column">
            <li><a href="#"><svg><use href="#d-bin"/></svg>Recycle Bin</a></li>
            <li><a href="#"><svg><use href="#d-adobe"/></svg>Adobe<br>Reader X</a></li>
            <li><a href="#"><svg><use href="#d-calibre"/></svg>calibre -<br>E-book ma...</a></li>
            <li><a href="#"><svg><use href="#d-easybcd"/></svg>EasyBCD<br>2.1.2</a></li>
            <li><a href="#"><svg><use href="#d-inkscape"/></svg>Inkscape</a></li>
            <li><a href="#"><svg><use href="#d-firefox"/></svg>Mozilla<br>Firefox</a></li>
            <li><a href="#"><svg><use href="#d-vbox"/></svg>Oracle VM<br>VirtualBox</a></li>
            <li><a href="#"><svg><use href="#d-skype"/></svg>Skype</a></li>
        </ul>
        <ul class="icon-column">
            <li><a href="#"><svg><use href="#d-vlc"/></svg>VLC media</a></li>
            <li class="skip-two"><a href="#"><svg><use href="#d-folder"/></svg>MINT</a></li>
            <li><a href="#"><svg><use href="#d-folder"/></svg>test</a></li>
            <li><a href="#"><svg><use href="#d-winsetup"/></svg>winsetup</a></li>
            <li><a href="#"><svg><use href="#d-text"/></svg>Book1</a></li>
            <li><a href="#"><svg><use href="#d-excel"/></svg>Book1</a></li>
        </ul>
        <ul class="icon-column">
            <li><a href="#"><svg><use href="#d-xlsdoc"/></svg>Book File</a></li>
            <li class="skip-two"><a href="#"><svg><use href="#d-chrome"/></svg>Google<br>Chrome</a></li>
            <li><a href="#"><svg><use href="#d-hills"/></svg>Hugin</a></li>
            <li><a href="#"><svg><use href="#d-miranda"/></svg>Miranda IM</a></li>
            <li><a href="#"><svg><use href="#d-nero"/></svg>Nero</a></li>
            <li><a href="#"><svg><use href="#d-sqlite"/></svg>SQLite<br>Maestro</a></li>
        </ul>
        <ul class="icon-column">
            <li><a href="#"><svg><use href="#d-eye"/></svg>Xnview</a></li>
            <li class="skip-two"><a href="#"><svg><use href="#d-xlaunch"/></svg>XLaunch</a></li>
            <li><a href="#"><svg><use href="#d-xming"/></svg>Xming</a></li>
        </ul>

        <!-- Drivers -->
        <section class="window win-drivers" aria-label="Drivers">
            <div class="controls">
                <button aria-label="Minimize"><svg><use href="#w-min"/></svg></button>
                <button aria-label="Maximize"><svg><use href="#w-max"/></svg></button>
                <button class="close" aria-label="Close"><svg><use href="#w-close"/></svg></button>
            </div>
            <div class="address-row">
                <button class="nav-btn" aria-label="Back"><svg><use href="#nav-back"/></svg></button>
                <button class="nav-btn forward" aria-label="Forward"><svg><use href="#nav-back"/></svg></button>
                <button class="history" aria-label="Recent pages"></button>
                <div class="address">
                    <svg class="icon"><use href="#folder"/></svg>
                    <i class="crumb-arrow"></i><a href="#">Computer</a>
                    <i class="crumb-arrow"></i><a href="#">Local Disk (C:)</a>
                    <i class="crumb-arrow"></i><a href="#">Drivers</a>
                    <button class="previous" aria-label="Previous locations"></button>
                    <button class="refresh" aria-label="Refresh"><svg><use href="#refresh"/></svg></button>
                </div>
            </div>
            <div class="client">
                <div class="toolbar">
                    <button class="menu">Organize</button>
                    <button class="menu">Include in library</button>
                    <button class="more">»</button>
                    <div class="tools">
                        <button class="menu" aria-label="Change view"><svg class="icon"><use href="#view-tiles"/></svg></button>
                        <button aria-label="Preview pane"><svg class="icon"><use href="#pane"/></svg></button>
                        <button aria-label="Help"><svg class="icon"><use href="#help"/></svg></button>
                    </div>
                </div>
                <div class="body">
                    <nav class="nav-pane padded">
                        <ul>
                            <li><a href="#"><svg class="icon"><use href="#star"/></svg>Favorites</a></li>
                            <li class="child"><a href="#"><svg class="icon"><use href="#desktop-i"/></svg>Desktop</a></li>
                            <li class="child"><a href="#"><svg class="icon"><use href="#downloads"/></svg>Downloads</a></li>
                            <li class="child"><a href="#"><svg class="icon"><use href="#recent"/></svg>Recent Places</a></li>
                            <li class="group"><a href="#"><svg class="icon"><use href="#libraries"/></svg>Libraries</a></li>
                            <li class="child"><a href="#"><svg class="icon"><use href="#documents"/></svg>Documents</a></li>
                            <li class="child"><a href="#"><svg class="icon"><use href="#music"/></svg>Music</a></li>
                            <li class="child"><a href="#"><svg class="icon"><use href="#pictures"/></svg>Pictures</a></li>
                            <li class="child"><a href="#"><svg class="icon"><use href="#videos"/></svg>Videos</a></li>
                            <li class="group"><a href="#"><svg class="icon"><use href="#computer"/></svg>Computer</a></li>
                            <li class="child selected"><a href="#"><svg class="icon"><use href="#disk"/></svg>Local Disk (C:)</a></li>
                            <li class="child"><a href="#"><svg class="icon"><use href="#netdrive"/></svg>depts (\\srmfs01) (S:)</a></li>
                            <li class="group"><a href="#"><svg class="icon"><use href="#network"/></svg>Network</a></li>
                        </ul>
                    </nav>
                    <ul class="tiles">
                        <li><svg><use href="#catalog"/></svg><div><h3>nusb3hub</h3><p><span>Type:</span> Security Catalog</p></div></li>
                        <li><svg><use href="#inf"/></svg><div><h3>nusb3hub</h3><p><span>Type:</span> Setup Information</p></div></li>
                        <li><svg><use href="#sys"/></svg><div><h3>nusb3hub.sys</h3><p><span>Type:</span> System file</p></div></li>
                        <li><svg><use href="#catalog"/></svg><div><h3>nusb3xhc</h3><p><span>Type:</span> Security Catalog</p></div></li>
                        <li><svg><use href="#inf"/></svg><div><h3>nusb3xhc</h3><p><span>Type:</span> Setup Information</p></div></li>
                        <li><svg><use href="#sys"/></svg><div><h3>nusb3xhc.sys</h3><p><span>Type:</span> System file</p></div></li>
                    </ul>
                </div>
                <footer class="details"><svg><use href="#folder-big"/></svg><p>6 items</p></footer>
            </div>
        </section>

        <!-- Internet Explorer -->
        <section class="window win-ie" aria-label="Internet Explorer">
            <div class="controls">
                <button aria-label="Minimize"><svg><use href="#w-min"/></svg></button>
                <button aria-label="Maximize"><svg><use href="#w-max"/></svg></button>
                <button class="close" aria-label="Close"><svg><use href="#w-close"/></svg></button>
            </div>
            <div class="address-row">
                <button class="nav-btn" aria-label="Back"><svg><use href="#nav-back"/></svg></button>
                <button class="nav-btn forward" aria-label="Forward"><svg><use href="#nav-back"/></svg></button>
                <button class="history" aria-label="Recent pages"></button>
                <div class="address">
                    <svg class="icon"><use href="#folder"/></svg>
                    <i class="crumb-arrow"></i><a href="#">Computer</a>
                    <i class="crumb-arrow"></i><a href="#">Local Disk (C:)</a>
                    <i class="crumb-arrow"></i><a href="#">Program Files (x86)</a>
                    <i class="crumb-arrow"></i><a href="#">Internet Explorer</a>
                    <i class="crumb-arrow"></i>
                    <button class="previous" aria-label="Previous locations"></button>
                    <button class="refresh" aria-label="Refresh"><svg><use href="#refresh"/></svg></button>
                </div>
                <label class="search"><input type="text" placeholder="Search Internet ..." aria-label="Search Internet Explorer"><svg><use href="#search"/></svg></label>
            </div>
            <div class="client">
                <div class="toolbar">
                    <button class="menu">Organize</button>
                    <button class="menu">Include in library</button>
                    <button class="menu">Share with</button>
                    <button>Burn</button>
                    <button>New folder</button>
                    <div class="tools">
                        <button class="menu" aria-label="Change view"><svg class="icon"><use href="#view-details"/></svg></button>
                        <button aria-label="Preview pane"><svg class="icon"><use href="#pane"/></svg></button>
                        <button aria-label="Help"><svg class="icon"><use href="#help"/></svg></button>
                    </div>
                </div>
                <div class="body">
                    <nav class="nav-pane">
                        <ul>
                            <li class="child"><a href="#"><svg class="icon"><use href="#documents"/></svg>Documents</a></li>
                            <li class="child"><a href="#"><svg class="icon"><use href="#music"/></svg>Music</a></li>
                            <li class="child"><a href="#"><svg class="icon"><use href="#pictures"/></svg>Pictures</a></li>
                            <li class="child"><a href="#"><svg class="icon"><use href="#videos"/></svg>Videos</a></li>
                            <li class="group"><a href="#"><svg class="icon"><use href="#computer"/></svg>Computer</a></li>
                            <li class="child selected"><a href="#"><svg class="icon"><use href="#disk"/></svg>Local Disk (C:)</a></li>
                            <li class="child"><a href="#"><svg class="icon"><use href="#netdrive"/></svg>depts (\\srmfs01)</a></li>
                        </ul>
                        <div class="scrollbar nav-scroll"><span class="thumb"></span></div>
                    </nav>
                    <div class="file-list">
                        <table>
                            <thead>
                                <tr><th class="name sorted">Name</th><th>Date modified</th><th>Type</th><th class="size">Size</th></tr>
                            </thead>
                            <tbody>
                                <tr><td><svg class="icon"><use href="#folder"/></svg>en-US</td><td>6/15/2012 11:42 A...</td><td>File folder</td><td></td></tr>
                                <tr><td><svg class="icon"><use href="#folder"/></svg>SIGNUP</td><td>8/21/2012 1:51 PM</td><td>File folder</td><td></td></tr>
                                <tr><td><svg class="icon"><use href="#app"/></svg>ExtExport</td><td>6/15/2012 11:41 A...</td><td>Application</td><td>22 KB</td></tr>
                                <tr><td><svg class="icon"><use href="#page"/></svg>ie9props.propdesc</td><td>6/15/2012 11:41 A...</td><td>PROPDESC File</td><td>3 KB</td></tr>
                                <tr><td><svg class="icon"><use href="#app-shield"/></svg>iecleanup</td><td>6/15/2012 11:41 A...</td><td>Application</td><td>105 KB</td></tr>
                                <tr><td><svg class="icon"><use href="#ie-tool"/></svg>iediagcmd</td><td>6/15/2012 11:41 A...</td><td>Application</td><td>300 KB</td></tr>
                                <tr><td><svg class="icon"><use href="#page-gears"/></svg>iedvtool.dll</td><td>11/13/2012 6:01 PM</td><td>Application extens...</td><td>663 KB</td></tr>
                                <tr><td><svg class="icon"><use href="#ie"/></svg>ieinstal</td><td>6/15/2012 11:41 A...</td><td>Application</td><td>456 KB</td></tr>
                            </tbody>
                        </table>
                        <div class="scrollbar list-scroll short"><span class="thumb"></span></div>
                    </div>
                </div>
                <footer class="details"><svg><use href="#folder-big"/></svg><p>20 items</p></footer>
            </div>
        </section>

        <!-- eclipse (active) -->
        <section class="window active win-eclipse" aria-label="eclipse">
            <div class="controls">
                <button aria-label="Minimize"><svg><use href="#w-min"/></svg></button>
                <button aria-label="Maximize"><svg><use href="#w-max"/></svg></button>
                <button class="close" aria-label="Close"><svg><use href="#w-close"/></svg></button>
            </div>
            <div class="address-row">
                <button class="nav-btn" aria-label="Back"><svg><use href="#nav-back"/></svg></button>
                <button class="nav-btn forward" aria-label="Forward"><svg><use href="#nav-back"/></svg></button>
                <button class="history" aria-label="Recent pages"></button>
                <div class="address">
                    <svg class="icon"><use href="#folder"/></svg>
                    <i class="crumb-arrow"></i><a href="#">Computer</a>
                    <i class="crumb-arrow"></i><a href="#">Local Disk (C:)</a>
                    <i class="crumb-arrow"></i><a href="#">development</a>
                    <i class="crumb-arrow"></i><a href="#">eclipse</a>
                    <i class="crumb-arrow"></i>
                    <button class="previous" aria-label="Previous locations"></button>
                    <button class="refresh" aria-label="Refresh"><svg><use href="#refresh"/></svg></button>
                </div>
                <label class="search"><input type="text" placeholder="Search eclipse" aria-label="Search eclipse"><svg><use href="#search"/></svg></label>
            </div>
            <div class="client">
                <div class="toolbar">
                    <button class="menu">Organize</button>
                    <button class="menu">Include in library</button>
                    <button class="menu">Share with</button>
                    <button>Burn</button>
                    <button>New folder</button>
                    <div class="tools">
                        <button class="menu" aria-label="Change view"><svg class="icon"><use href="#view-details"/></svg></button>
                        <button aria-label="Preview pane"><svg class="icon"><use href="#pane"/></svg></button>
                        <button aria-label="Help"><svg class="icon"><use href="#help"/></svg></button>
                    </div>
                </div>
                <div class="body">
                    <nav class="nav-pane">
                        <ul>
                            <li class="child"><a href="#"><svg class="icon"><use href="#documents"/></svg>Documents</a></li>
                            <li class="child"><a href="#"><svg class="icon"><use href="#music"/></svg>Music</a></li>
                            <li class="child"><a href="#"><svg class="icon"><use href="#pictures"/></svg>Pictures</a></li>
                            <li class="child"><a href="#"><svg class="icon"><use href="#videos"/></svg>Videos</a></li>
                            <li class="group"><a href="#"><svg class="icon"><use href="#computer"/></svg>Computer</a></li>
                            <li class="child selected"><a href="#"><svg class="icon"><use href="#disk"/></svg>Local Disk (C:)</a></li>
                            <li class="child"><a href="#"><svg class="icon"><use href="#netdrive"/></svg>depts (\\srmfs01)</a></li>
                        </ul>
                        <div class="scrollbar nav-scroll"><span class="thumb"></span></div>
                    </nav>
                    <div class="file-list">
                        <table>
                            <thead>
                                <tr><th class="name sorted">Name</th><th>Date modified</th><th>Type</th><th class="size">Size</th></tr>
                            </thead>
                            <tbody>
                                <tr><td><svg class="icon"><use href="#folder-locked"/></svg>configuration</td><td>12/18/2012 11:39 ...</td><td>File folder</td><td></td></tr>
                                <tr><td><svg class="icon"><use href="#folder-locked"/></svg>dropins</td><td>2/18/2011 3:34 AM</td><td>File folder</td><td></td></tr>
                                <tr><td><svg class="icon"><use href="#folder-locked"/></svg>features</td><td>10/11/2012 3:36 PM</td><td>File folder</td><td></td></tr>
                                <tr><td><svg class="icon"><use href="#folder-locked"/></svg>p2</td><td>2/18/2011 3:32 AM</td><td>File folder</td><td></td></tr>
                                <tr><td><svg class="icon"><use href="#folder-locked"/></svg>plugins</td><td>10/11/2012 3:36 PM</td><td>File folder</td><td></td></tr>
                                <tr><td><svg class="icon"><use href="#folder-locked"/></svg>readme</td><td>2/18/2011 3:34 AM</td><td>File folder</td><td></td></tr>
                                <tr><td><svg class="icon"><use href="#page-locked"/></svg>.eclipseproduct</td><td>7/29/2010 10:37 A...</td><td>ECLIPSEPRODUCT ...</td><td>1 KB</td></tr>
                                <tr><td><svg class="icon"><use href="#page-xml"/></svg>artifacts</td><td>10/11/2012 3:36 PM</td><td>XML Document</td><td>93 KB</td></tr>
                            </tbody>
                        </table>
                        <div class="scrollbar list-scroll"><span class="thumb"></span></div>
                    </div>
                </div>
                <footer class="details"><svg><use href="#folder-big"/></svg><p>13 items</p></footer>
            </div>
        </section>
    </main>

    <!-- Taskbar -->
    <footer class="taskbar">
        <button class="start" aria-label="Start"><svg><use href="#orb"/></svg></button>
        <span class="grip"></span>
        <button class="pinned first" aria-label="Internet Explorer"><svg><use href="#ie"/></svg></button>
        <button class="task alert"><svg><use href="#folder-big"/></svg>Drivers</button>
        <button class="task alert"><svg><use href="#folder-big"/></svg>Internet Expl...</button>
        <button class="task"><svg><use href="#folder-big"/></svg>eclipse</button>
        <button class="pinned" aria-label="Firefox"><svg><use href="#firefox"/></svg></button>
        <button class="pinned" aria-label="Media Player"><svg><use href="#wmp"/></svg></button>
        <button class="pinned" aria-label="Window inspector"><svg><use href="#inspector"/></svg></button>
        <button class="pinned" aria-label="Chrome"><svg><use href="#chrome"/></svg></button>
        <button class="pinned" aria-label="PuTTY"><svg><use href="#putty"/></svg></button>
        <div class="tray">
            <span class="grip"></span>
            <button class="lang">EN</button>
            <button class="tray-more" aria-label="Show hidden icons"></button>
            <button aria-label="Battery"><svg class="icon"><use href="#battery"/></svg></button>
            <button aria-label="Network"><svg class="tray-icon"><use href="#signal"/></svg></button>
            <button aria-label="Volume"><svg class="icon"><use href="#speaker"/></svg></button>
            <button class="clock">12:55 PM<br>1/6/2013</button>
            <button class="show-desktop" aria-label="Show desktop"></button>
        </div>
    </footer>
</body>

</html>
```
FILE: styles.css
```css
* {
    box-sizing: border-box;
}

body {
    margin: 0;
    height: 100vh;
    display: flex;
    flex-direction: column;
    overflow: hidden;
    background-color: #0038b8;
    font-family: "Open Sans", "Noto Sans", sans-serif;
    font-size: 14px;
    color: #000;
}

ul {
    list-style: none;
    margin: 0;
    padding: 0;
}

a {
    color: inherit;
    text-decoration: none;
}

button {
    font: inherit;
    color: inherit;
    background: none;
    border: 0;
    padding: 0;
}

svg {
    display: block;
    flex: none;
}

.sprite {
    position: absolute;
}

.icon {
    width: 20px;
    height: 20px;
}

/* Desktop */
.desktop {
    flex: 1;
    display: flex;
    align-items: flex-start;
    padding-top: 6px;
    min-height: 0;
}

.wallpaper {
    position: absolute;
    left: 0;
    top: 0;
    width: 100%;
    height: 100%;
    z-index: -1;
}

.icon-column {
    width: 95px;
}

.icon-column li {
    height: 129px;
}

.icon-column .skip-two {
    margin-top: 258px;
}

.icon-column a {
    display: block;
    padding-right: 1px;
    text-align: center;
    white-space: nowrap;
    line-height: 20px;
    color: #fff;
    text-shadow: 0 1px 2px #000, 1px 1px 3px #000;
}

.icon-column svg {
    width: 58px;
    height: 60px;
    margin: 0 auto 5px;
}

/* Windows */
.window {
    position: absolute;
    display: flex;
    flex-direction: column;
    padding: 0 7px 7px;
    border: 1px solid #16264a;
    border-radius: 8px;
    background: linear-gradient(115deg, rgba(255, 255, 255, .22), rgba(255, 255, 255, 0) 22%, rgba(255, 255, 255, .06) 40%, rgba(255, 255, 255, 0) 60%, rgba(255, 255, 255, .1) 90%), rgba(133, 168, 225, .28);
    box-shadow: inset 0 0 0 1px rgba(220, 235, 255, .75), 0 2px 8px rgba(0, 0, 0, .5);
    backdrop-filter: blur(4px);
}

.window.active {
    background: linear-gradient(115deg, rgba(255, 255, 255, .4), rgba(255, 255, 255, 0) 22%, rgba(255, 255, 255, .05) 40%, rgba(255, 255, 255, 0) 70%, rgba(255, 255, 255, .2)), rgba(72, 84, 106, .5);
    box-shadow: inset 0 0 0 1px rgba(235, 242, 255, .85), 0 3px 14px 3px rgba(0, 0, 0, .75);
}

.win-eclipse {
    left: 24px;
    top: 7px;
    width: 1079px;
    height: 432px;
}

.win-ie {
    left: 225px;
    top: 518px;
    width: 1079px;
    height: 432px;
}

.win-drivers {
    left: 1325px;
    top: 38px;
    width: 548px;
    height: 992px;
}

.controls {
    align-self: flex-end;
    display: flex;
    height: 24px;
    border: 1px solid rgba(225, 235, 255, .6);
    border-top: 0;
    border-radius: 0 0 5px 5px;
    box-shadow: 0 0 0 1px rgba(20, 40, 90, .45);
    overflow: hidden;
}

.controls button {
    width: 34px;
    display: flex;
    align-items: center;
    justify-content: center;
    border-right: 1px solid rgba(20, 40, 90, .5);
}

.controls .close {
    width: 58px;
    border-right: 0;
}

.controls svg {
    width: 20px;
    height: 16px;
}

.active .controls button {
    background: linear-gradient(rgba(255, 255, 255, .5), rgba(255, 255, 255, .2) 50%, rgba(20, 40, 90, .25) 50%, rgba(255, 255, 255, .15));
}

.active .controls .close {
    background: linear-gradient(#e0a598, #cc6653 48%, #b52a17 50%, #d2533c);
}

.address-row {
    display: flex;
    align-items: center;
    height: 34px;
    margin: 12px 2px 5px;
}

.nav-btn {
    width: 34px;
    height: 34px;
    margin-right: 2px;
}

.nav-btn svg {
    width: 34px;
    height: 34px;
}

.forward {
    transform: scaleX(-1);
}

.history,
.previous,
.menu::after,
.tray-more {
    width: 0;
    height: 0;
    border: 5px solid transparent;
    border-bottom: 0;
    border-top-color: #1e395b;
}

.history {
    margin: 0 4px 0 0;
    border-top-color: rgba(255, 255, 255, .55);
}

.address,
.search {
    display: flex;
    align-items: center;
    height: 26px;
    border: 1px solid #2c3f6c;
    background: rgba(255, 255, 255, .7);
    box-shadow: inset 0 0 0 1px rgba(255, 255, 255, .5), 0 0 0 1px rgba(255, 255, 255, .4);
}

.address {
    flex: 1;
    padding-left: 3px;
    color: #48525f;
    white-space: nowrap;
}

.active .address {
    color: #1a1e26;
}

.address .icon {
    margin-right: -3px;
}

.crumb-arrow {
    border: 5px solid transparent;
    border-right: 0;
    border-left-color: #000;
    margin: 0 12px 0 11px;
}

.previous {
    margin: 0 5px 0 auto;
    border-top-color: #00005a;
}

.refresh {
    width: 30px;
    height: 24px;
    border-left: 1px solid #2c3f6c;
}

.refresh svg {
    width: 18px;
    height: 18px;
    margin: 0 auto;
}

.search {
    width: 150px;
    margin-left: 6px;
    padding: 0 6px 0 9px;
}

.search input {
    flex: 1;
    min-width: 0;
    border: 0;
    padding: 0;
    background: none;
    outline: 0;
    font: inherit;
    font-style: italic;
}

.search input::placeholder {
    color: #5f6a7a;
    opacity: 1;
}

.search svg {
    width: 16px;
    height: 16px;
}

.client {
    flex: 1;
    min-height: 0;
    display: flex;
    flex-direction: column;
    border: 1px solid #1c2c52;
    box-shadow: 0 0 0 1px rgba(220, 235, 255, .7);
    background: #fcfcfc;
}

/* Command bar */
.toolbar {
    display: flex;
    align-items: center;
    gap: 36px;
    height: 39px;
    padding: 0 19px 0 21px;
    border-bottom: 1px solid #a0b4cf;
    background: linear-gradient(#fafdff, #eaf3fc 50%, #dce6f4 50%, #dde9f7);
    color: #1e395b;
    white-space: nowrap;
}

.menu {
    display: flex;
    align-items: center;
    gap: 5px;
}

.menu::after {
    content: "";
}

.more {
    margin-left: -8px;
    font-size: 16px;
}

.tools {
    display: flex;
    align-items: center;
    gap: 26px;
    margin-left: auto;
}

.tools .menu {
    gap: 12px;
}

.body {
    flex: 1;
    min-height: 0;
    display: flex;
    overflow: hidden;
}

/* Navigation pane */
.nav-pane {
    display: flex;
    flex: none;
    width: 197px;
    padding-right: 2px;
    border-right: 1px solid #d6e5f5;
    overflow: hidden;
}

.nav-pane.padded {
    padding-top: 9px;
}

.nav-pane ul {
    flex: 1;
    min-width: 0;
}

.nav-pane a {
    display: flex;
    align-items: center;
    gap: 5px;
    height: 27px;
    padding-left: 23px;
    white-space: nowrap;
    overflow: hidden;
}

.nav-pane .child a {
    padding-left: 33px;
}

.nav-pane .group {
    margin-top: 27px;
}

.nav-pane .selected a {
    border: 1px solid #d9d9d9;
    border-right: 0;
    border-radius: 3px 0 0 3px;
    padding-left: 32px;
    background: linear-gradient(#f8f8f8, #e5e5e5);
}

.scrollbar {
    flex: none;
    width: 19px;
    display: flex;
    flex-direction: column;
    align-items: center;
    background: #f0f0f0;
}

.scrollbar::before,
.scrollbar::after {
    content: "";
    border: 4px solid transparent;
    border-top: 0;
    border-bottom: 5px solid #444;
    margin-top: 8px;
}

.scrollbar::after {
    border-top: 5px solid #444;
    border-bottom: 0;
    margin: auto 0 9px;
}

.thumb {
    width: 19px;
    height: 111px;
    margin-top: 9px;
    border: 1px solid #979797;
    border-radius: 2px;
    background: repeating-linear-gradient(#555 0 1px, transparent 1px 4px) center / 9px 10px no-repeat, linear-gradient(90deg, #f5f5f5, #e9e9eb 48%, #d3d4d8 50%, #c4c5ca);
}

.short .thumb {
    height: 72px;
}

.nav-scroll .thumb {
    height: 85px;
    margin-top: 84px;
}

/* Details view */
.file-list {
    flex: 1;
    min-width: 0;
    display: flex;
    justify-content: space-between;
    padding-right: 1px;
}

table {
    align-self: flex-start;
    border-collapse: collapse;
    table-layout: fixed;
    width: 742px;
    white-space: nowrap;
}

th {
    position: relative;
    width: 150px;
    height: 41px;
    padding: 0 0 9px 7px;
    font-weight: normal;
    text-align: left;
    color: #4c607a;
    background: linear-gradient(#d6e5f5 60%, transparent) right top / 1px 30px no-repeat;
}

.name {
    width: 342px;
    padding-left: 23px;
}

.size {
    width: 100px;
}

.sorted::before {
    content: "";
    position: absolute;
    top: 1px;
    left: 51%;
    border: 5px solid transparent;
    border-top: 0;
    border-bottom-color: #5f9cc4;
}

td {
    height: 27px;
    padding: 0 0 0 7px;
    color: #6d6d6d;
}

td:first-child {
    padding-left: 24px;
    color: #000;
}

td:last-child {
    padding-right: 10px;
    text-align: right;
}

td .icon {
    float: left;
    margin-right: 6px;
}

/* Tiles view */
.tiles {
    flex: 1;
    min-width: 0;
    padding: 9px 11px 0 25px;
}

.tiles li {
    display: flex;
    gap: 12px;
    height: 60px;
    padding-top: 8px;
    border-bottom: 1px solid #dcdcdc;
}

.tiles li:last-child {
    border-bottom: 0;
}

.tiles svg {
    width: 36px;
    height: 36px;
}

.tiles h3 {
    margin: 0;
    font-size: 17px;
    font-weight: normal;
    line-height: 22px;
}

.tiles p {
    margin: 2px 0 0;
    line-height: 22px;
}

.tiles span {
    color: #6d6d6d;
}

/* Details pane */
.details {
    flex: none;
    display: flex;
    gap: 22px;
    height: 66px;
    padding: 4px 0 0 26px;
    border-top: 2px solid #ccdaea;
    background: #f1f4fc;
    color: #1e395b;
}

.details svg {
    width: 50px;
    height: 57px;
}

.details p {
    margin: 0;
    font-size: 16px;
    line-height: 24px;
}

/* Taskbar */
.taskbar {
    position: relative;
    display: flex;
    align-items: center;
    height: 48px;
    border-top: 1px solid #0c1f4a;
    box-shadow: inset 0 1px 0 rgba(170, 190, 225, .8);
    background: linear-gradient(90deg, #1b3268, #22396f 40%, #263c74 65%, #1c3c78 72%, #274c8c);
    color: #fff;
}

.start {
    margin-left: 10px;
}

.start svg {
    width: 46px;
    height: 46px;
}

.grip {
    width: 11px;
    height: 39px;
    margin-left: 14px;
    background: radial-gradient(circle, #8fa0c4 0 1px, #0a1838 1px 2px, transparent 2px) 0 0 / 4px 7px;
}

.pinned {
    width: 70px;
}

.pinned svg {
    width: 38px;
    height: 38px;
    margin: 0 auto;
}

.pinned.first {
    width: 80px;
    padding-left: 3px;
}

.pinned.first svg {
    width: 40px;
    height: 40px;
}

.task {
    display: flex;
    align-items: center;
    gap: 10px;
    width: 159px;
    height: 46px;
    padding-left: 10px;
    border: 1px solid #c9d4ea;
    border-radius: 2px;
    background: linear-gradient(172deg, #b4bdd8, #8e9bbf 48%, #67779f 52%, #8f9cc0);
    white-space: nowrap;
}

.task svg {
    width: 32px;
    height: 37px;
}

.task.alert {
    border-color: #fbe9ac;
    background: linear-gradient(172deg, #dedcb2, #b9b45f 46%, #b3924a 54%, #e0ae62);
}

.tray {
    display: flex;
    align-items: center;
    align-self: stretch;
    margin-left: auto;
}

.tray .grip {
    margin-left: 0;
}

.lang {
    margin: 0 22px 6px 9px;
    font-family: "Liberation Sans", sans-serif;
}

.tray-more {
    margin-right: 17px;
    border-top: 0;
    border-bottom: 5px solid #fff;
}

.tray-icon {
    width: 16px;
    height: 16px;
    margin: 0 14px 0 12px;
}

.clock {
    margin-left: 19px;
    width: 62px;
    line-height: 22px;
    text-align: center;
    white-space: nowrap;
}

.show-desktop {
    align-self: stretch;
    width: 14px;
    margin: 1px 0 1px 14px;
    border: 1px solid #8fa5cc;
    background: linear-gradient(170deg, #7488b4, #2c4a84 50%, #24458a);
}
```
